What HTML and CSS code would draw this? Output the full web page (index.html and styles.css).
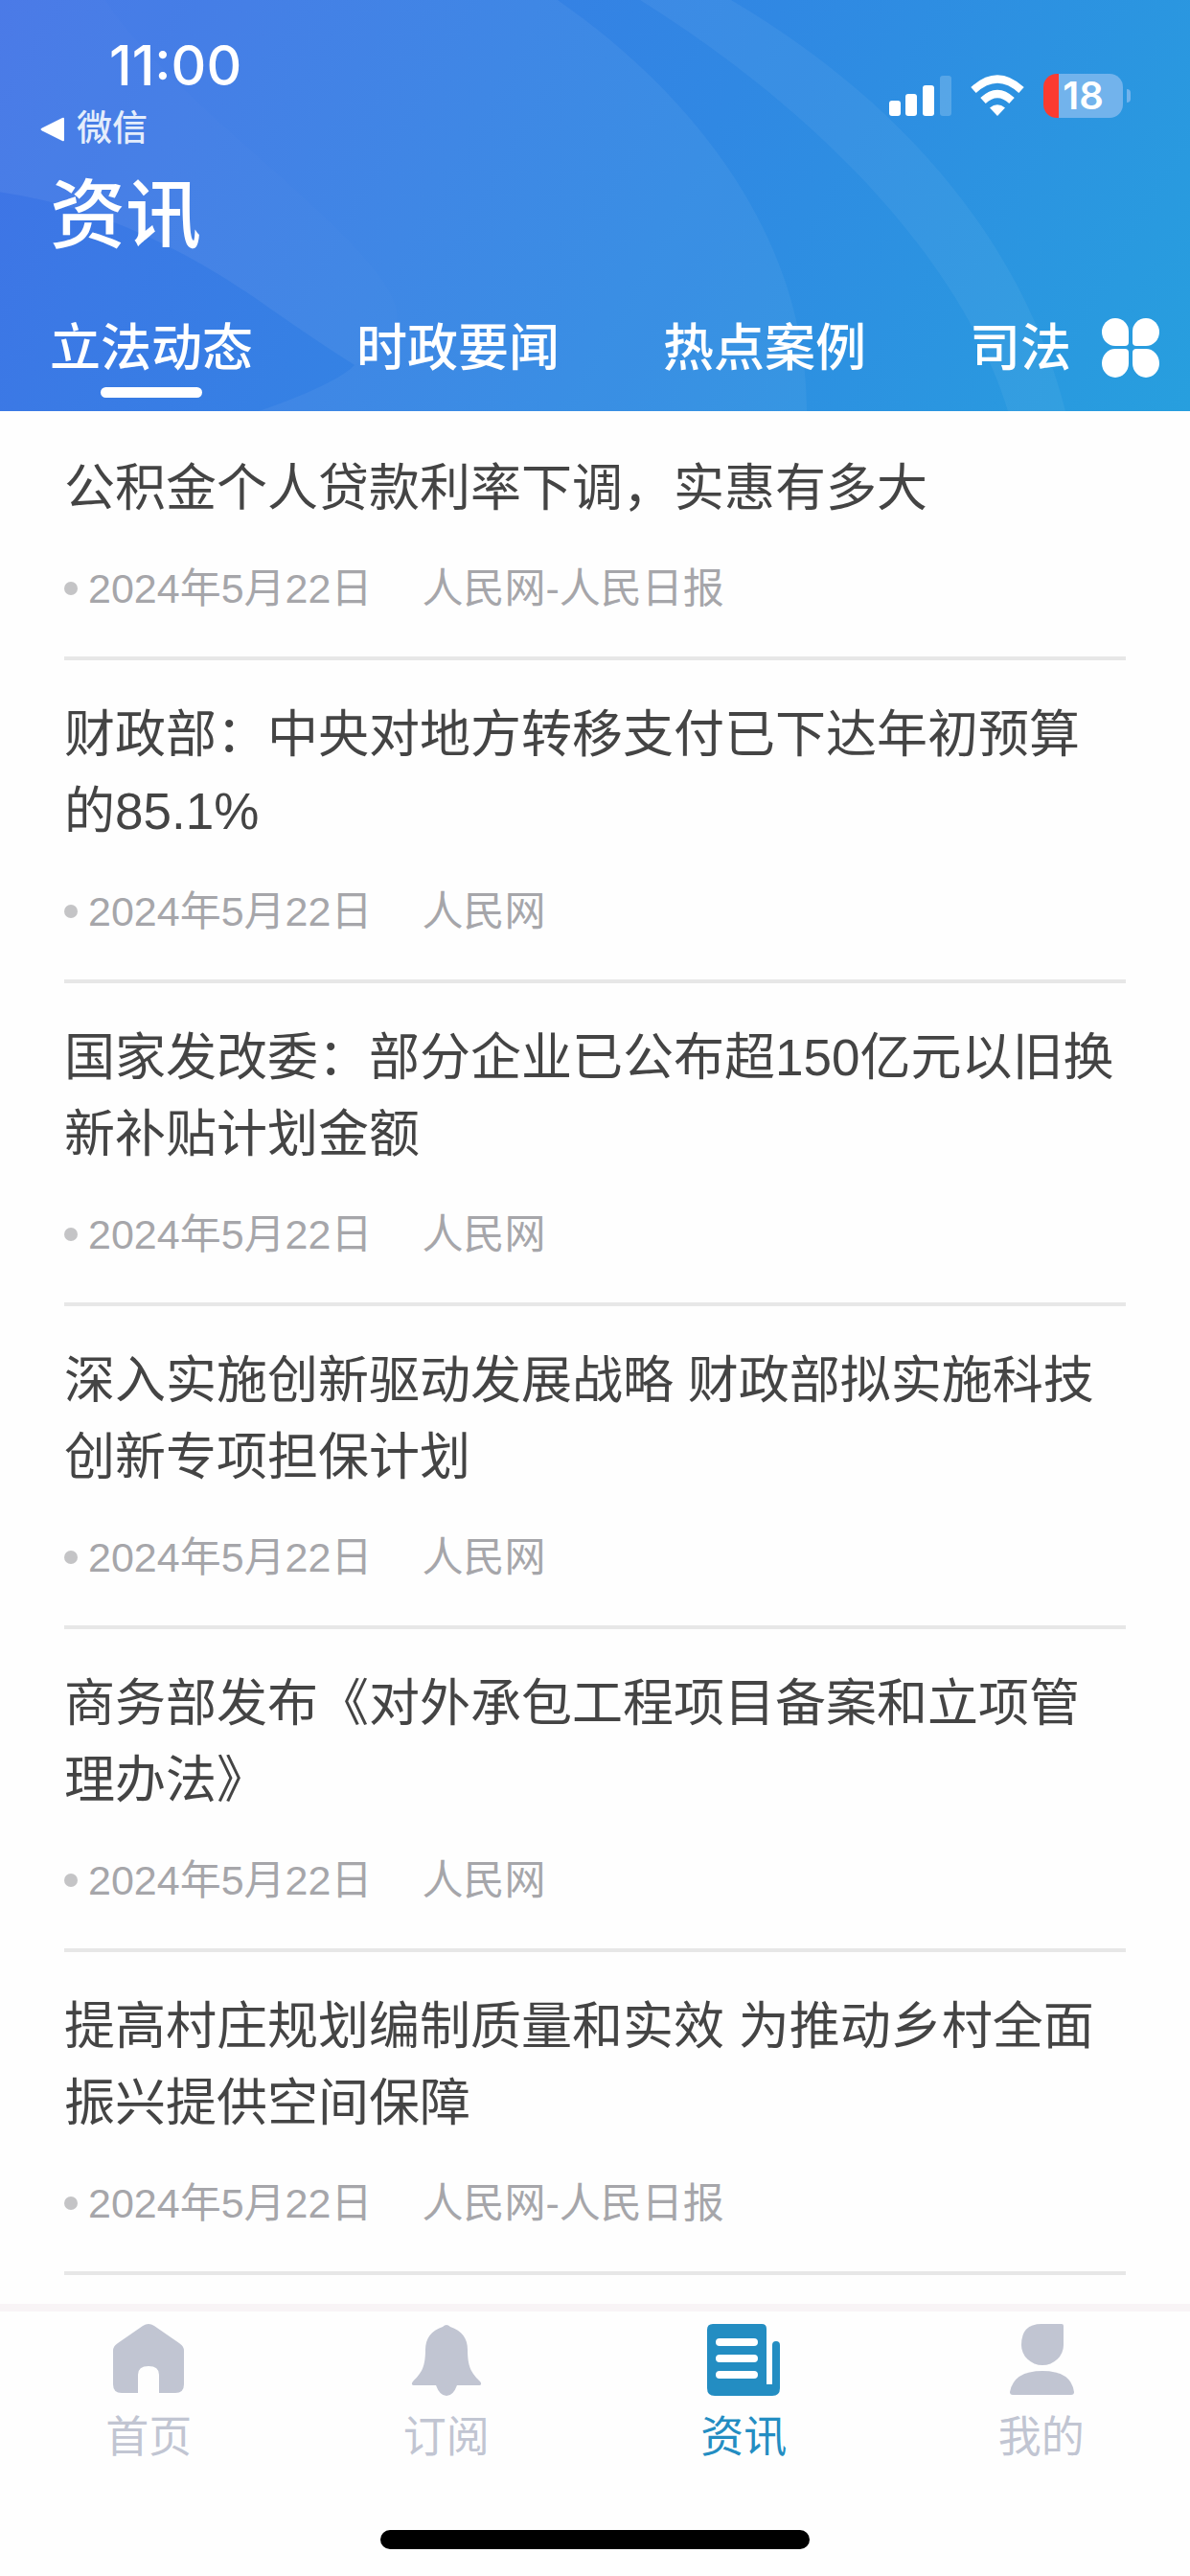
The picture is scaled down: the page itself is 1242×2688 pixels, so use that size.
FILE: index.html
```html
<!DOCTYPE html>
<html lang="zh-CN">
<head>
<meta charset="UTF-8">
<meta name="viewport" content="width=device-width, initial-scale=1.0">
<title>资讯</title>
<link rel="stylesheet" href="styles.css">
</head>
<body>
<header class="header">
    <svg class="header-bg" viewBox="0 0 1242 428" preserveAspectRatio="none" aria-hidden="true">
        <path d="M0 0H582C740 110 842 260 842 428H270Q350 400 370 380Q345 365 280 320Q140 220 0 200Z" fill="#fff" fill-opacity=".05"/>
        <path d="M0 0H110C180 110 415 260 415 330Q415 360 370 380Q345 365 280 320Q140 220 0 200Z" fill="#fff" fill-opacity=".012"/>
        <path d="M668 0H763C950 110 1070 260 1112 428H1052C1005 275 860 120 668 0Z" fill="#fff" fill-opacity=".05"/>
    </svg>
    <div class="status-bar">
        <div class="status-left">
            <div class="time">11:00</div>
            <a class="back" href="#">
                <svg width="26" height="26" viewBox="0 0 26 26" aria-hidden="true"><path d="M2 11.5 23 1q2-1 2 1v22q0 2-2 1L2 14.500q-3-1.500 0-3Z" fill="#fff"/></svg>
                微信
            </a>
        </div>
        <div class="status-icons">
            <svg width="65" height="44" viewBox="0 0 65 44" aria-hidden="true">
                <g fill="#fff">
                    <rect y="27" width="12" height="16" rx="3"/>
                    <rect x="17" y="20" width="12" height="23" rx="3"/>
                    <rect x="35" y="11" width="12" height="32" rx="3"/>
                    <rect x="53" y="1" width="12" height="42" rx="3" fill-opacity=".2"/>
                </g>
            </svg>
            <svg width="58" height="44" viewBox="0 0 58 44" aria-hidden="true">
                <path d="M4 16Q29-7 54 16" fill="none" stroke="#fff" stroke-width="8"/>
                <path d="M14 27Q29 13 44 27" fill="none" stroke="#fff" stroke-width="8"/>
                <path d="M21 34.500Q29 28 37 34.500L29 43Z" fill="#fff"/>
            </svg>
            <div class="battery">18</div>
        </div>
    </div>
    <h1 class="title">资讯</h1>
    <nav class="tabs">
        <div class="tab-list">
            <button class="tab active">立法动态</button>
            <button class="tab">时政要闻</button>
            <button class="tab">热点案例</button>
            <button class="tab">司法</button>
        </div>
        <button class="more" aria-label="全部栏目">
            <svg width="60" height="62" viewBox="0 0 60 62" aria-hidden="true">
                <g fill="#fff">
                    <path d="M14 0a14 14 0 0 1 14 14v11q0 4-4 4H14a14 14.500 0 0 1 0-29Z"/>
                    <path d="M46 0a14 14.500 0 0 1 0 29H36q-4 0-4-4V14A14 14 0 0 1 46 0Z"/>
                    <path d="M14 32h10q4 0 4 4v11a14 15 0 1 1-14-15Z"/>
                    <path d="M36 32h10a14 15 0 1 1-14 15V36q0-4 4-4Z"/>
                </g>
            </svg>
        </button>
    </nav>
</header>

<main class="news-list">
    <article class="news">
        <h2>公积金个人贷款利率下调，实惠有多大</h2>
        <p class="meta"><span class="date">2024年5月22日</span><span>人民网-人民日报</span></p>
    </article>
    <article class="news">
        <h2>财政部：中央对地方转移支付已下达年初预算的85.1%</h2>
        <p class="meta"><span class="date">2024年5月22日</span><span>人民网</span></p>
    </article>
    <article class="news">
        <h2>国家发改委：部分企业已公布超150亿元以旧换新补贴计划金额</h2>
        <p class="meta"><span class="date">2024年5月22日</span><span>人民网</span></p>
    </article>
    <article class="news">
        <h2>深入实施创新驱动发展战略 财政部拟实施科技创新专项担保计划</h2>
        <p class="meta"><span class="date">2024年5月22日</span><span>人民网</span></p>
    </article>
    <article class="news">
        <h2>商务部发布《对外承包工程项目备案和立项管理办法》</h2>
        <p class="meta"><span class="date">2024年5月22日</span><span>人民网</span></p>
    </article>
    <article class="news">
        <h2>提高村庄规划编制质量和实效 为推动乡村全面振兴提供空间保障</h2>
        <p class="meta"><span class="date">2024年5月22日</span><span>人民网-人民日报</span></p>
    </article>
</main>

<footer class="bottom">
    <nav class="tab-bar">
        <a class="item" href="#">
            <svg width="76" height="76" viewBox="0 0 76 76" aria-hidden="true"><path d="M32 2q6-4 12 0l26 18q5 3 5 8v35q0 9-9 9H49V53q0-9-11-9t-11 9v19H10q-9 0-9-9V28q0-5 5-8Z" fill="currentColor"/></svg>
            首页
        </a>
        <a class="item" href="#">
            <svg width="76" height="76" viewBox="0 0 76 76" aria-hidden="true"><path d="M34 3q4-4 8 0C54 7 60 15 60 27c0 18 4 24 13 33q3 4-2 4H49q-4 11-11 11t-11-11H5q-5 0-2-4c9-9 13-15 13-33C16 15 22 7 34 3Z" fill="currentColor"/></svg>
            订阅
        </a>
        <a class="item active" href="#">
            <svg width="76" height="76" viewBox="0 0 76 76" aria-hidden="true">
                <path d="M6 0h51q5 0 5 5v58h6V22q0-4 4-4t4 4v45q0 8-8 8H8q-8 0-8-8V6q0-6 6-6Z" fill="currentColor"/>
                <path d="M13 19h36M13 36h36M13 53h36" stroke="#fff" stroke-width="8" stroke-linecap="round"/>
            </svg>
            资讯
        </a>
        <a class="item" href="#">
            <svg width="76" height="76" viewBox="0 0 76 76" aria-hidden="true">
                <path d="M38 0h21q2 0 2 2v20a22 21 0 1 1-44 0Q17 0 38 0Z" fill="currentColor"/>
                <path d="M5 71Q9 49 39 49T72 71q0 3-3 3H8q-3 0-3-3Z" fill="currentColor"/>
            </svg>
            我的
        </a>
    </nav>
    <div class="home-indicator"></div>
</footer>
</body>
</html>
```
FILE: styles.css
```css
* {
    box-sizing: border-box;
}
body {
    margin: 0;
    min-height: 100vh;
    display: flex;
    flex-direction: column;
    background-color: #fefefe;
    font-family: "Liberation Sans", "Noto Sans CJK SC", sans-serif;
    color: #444;
}
a {
    color: inherit;
    text-decoration: none;
}
button {
    padding: 0;
    border: none;
    background: none;
    color: inherit;
    font: inherit;
    cursor: pointer;
}
svg {
    display: block;
    flex-shrink: 0;
}

/* Header */
.header {
    position: relative;
    padding-top: 34px;
    background: linear-gradient(120deg, #4072e6 0%, #3088e3 55%, #279fde 100%);
    color: #fff;
}
.header-bg {
    position: absolute;
    top: 0;
    left: 0;
    width: 100%;
    height: 100%;
}
.status-bar,
.title,
.tabs {
    position: relative;
}
.status-bar {
    display: flex;
    justify-content: space-between;
    align-items: center;
    padding: 0 62px 0 42px;
}
.time {
    padding-left: 72px;
    font: 500 57px/70px Inter, sans-serif;
}
.back {
    display: flex;
    align-items: center;
    gap: 12px;
    font-size: 37px;
    font-weight: 500;
    line-height: 62px;
    color: #e4edfb;
}
.status-icons {
    display: flex;
    align-items: center;
    gap: 19px;
}
.battery {
    position: relative;
    width: 83px;
    height: 46px;
    margin-right: 8px;
    border-radius: 14px;
    background: linear-gradient(90deg, #fb3b30 16px, #72b3ec 16px);
    font: 600 40px/46px Inter, sans-serif;
    text-align: center;
}
.battery::after {
    content: "";
    position: absolute;
    top: 16px;
    right: -8px;
    width: 4px;
    height: 14px;
    border-radius: 0 4px 4px 0;
    background-color: #72b3ec;
}
.title {
    margin: 10px 0 52px;
    padding-left: 52px;
    font-size: 79px;
    font-weight: 500;
    line-height: 100px;
}
.tabs {
    display: flex;
    align-items: flex-start;
    justify-content: space-between;
    padding: 0 32px 0 52px;
    height: 101px;
}
.tab-list {
    display: flex;
    gap: 108px;
    overflow: hidden;
}
.tab {
    flex-shrink: 0;
    display: flex;
    flex-direction: column;
    align-items: center;
    gap: 4px;
    font-size: 53px;
    font-weight: 500;
    line-height: 72px;
}
.tab.active::after {
    content: "";
    width: 106px;
    height: 11px;
    border-radius: 6px;
    background-color: #fff;
}
.more {
    padding-top: 4px;
}

/* News list */
.news-list {
    flex: 1;
    padding: 3px 67px 0;
}
.news {
    padding: 38px 0 41px;
    border-bottom: 4px solid #e7e7e7;
}
.news h2 {
    margin: 0 0 34px;
    font-size: 53px;
    font-weight: 400;
    line-height: 80px;
}
.meta {
    display: flex;
    align-items: center;
    margin: 0;
    font-size: 43px;
    line-height: 60px;
    color: #a6a6aa;
}
.meta::before {
    content: "";
    width: 14px;
    height: 14px;
    margin-right: 11px;
    border-radius: 50%;
    background-color: #c4c4c6;
}
.date {
    margin-right: 52px;
}

/* Bottom bar */
.bottom {
    border-top: 8px solid #f8f4f6;
    padding: 13px 0 28px;
}
.tab-bar {
    display: grid;
    grid-template-columns: repeat(4, 1fr);
}
.item {
    display: flex;
    flex-direction: column;
    align-items: center;
    gap: 10px;
    font-size: 45px;
    line-height: 66px;
    color: #c1c5d2;
}
.item.active {
    color: #238dc2;
}
.home-indicator {
    width: 36%;
    height: 20px;
    margin: 63px auto 0;
    border-radius: 10px;
    background-color: #000;
}
```
